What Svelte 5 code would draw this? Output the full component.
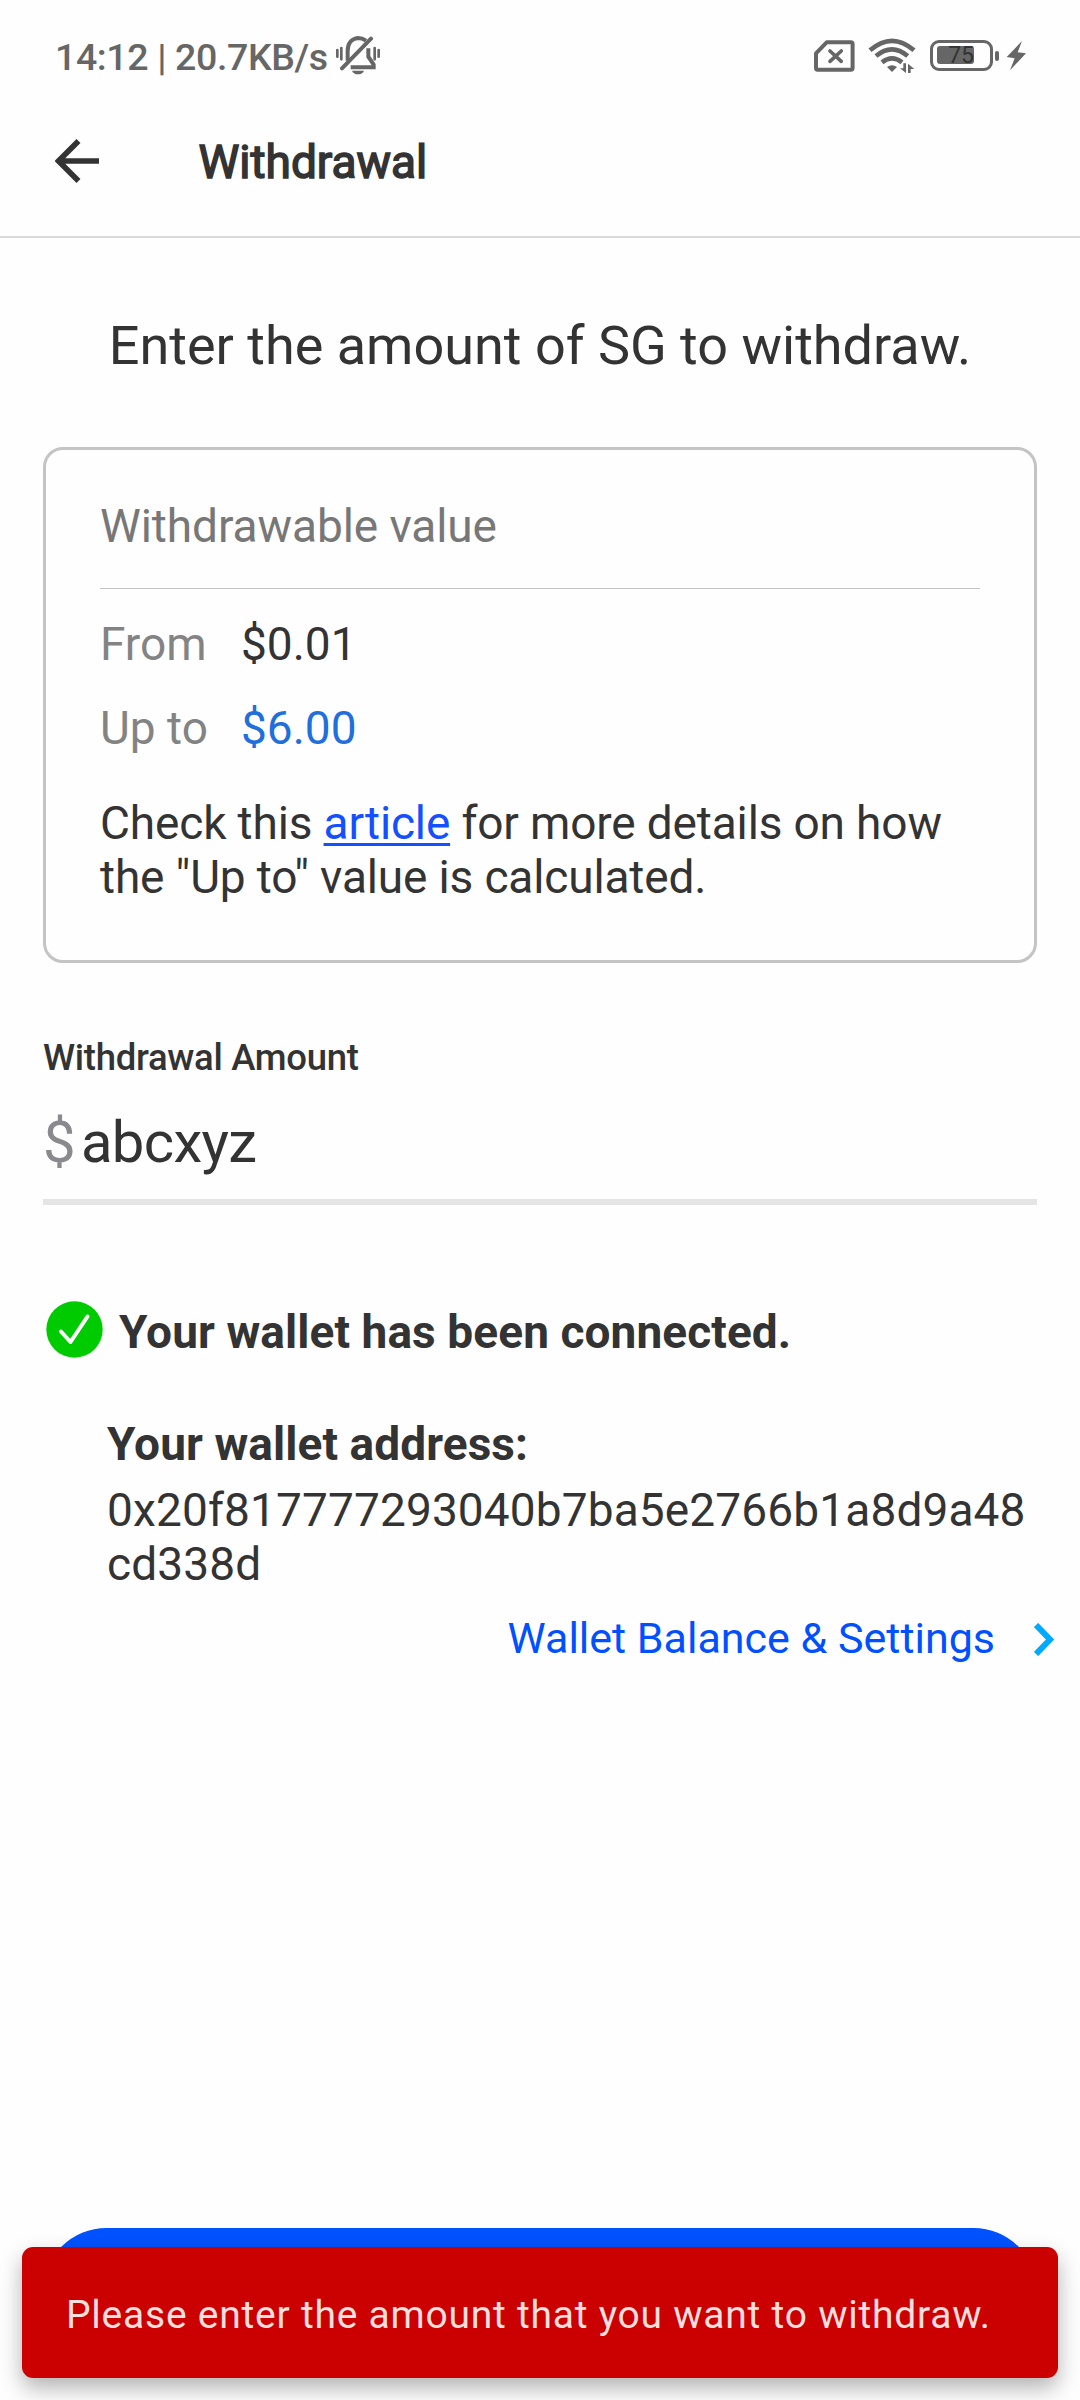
<script>
  const limits = [
    { label: 'From', value: '$0.01', accent: false },
    { label: 'Up to', value: '$6.00', accent: true },
  ];
  const address = '0x20f817777293040b7ba5e2766b1a8d9a48cd338d';
</script>

<div class="screen">
  <div class="status">
    <span class="clock">14:12 | 20.7KB/s</span>
    <svg class="bell" viewBox="915 48 138 117" fill="none" stroke="#666">
      <path d="M922 90V110M934 84V118M1034 84V118M1046 90V110" stroke-width="8" stroke-linecap="round" />
      <path d="M953 122V92C953 70 965 56 984 54C994 54 1001 57 1008 62M1015 85V110L1031 134V142H962" stroke-width="12" />
      <path d="M936 145L1023 56" stroke-width="12" stroke-linecap="round" />
      <path d="M966 152H1002C999 160 992 163 984 163C976 163 969 160 966 152Z" fill="#666" stroke="none" />
    </svg>
    <div class="indicators">
      <svg class="sim" viewBox="71 61 122 96" fill="none" stroke="#666">
        <path d="M109 68H182Q187 68 187 73V145Q187 150 182 150H82Q77 150 77 145V101Z" stroke-width="12" stroke-linejoin="round" />
        <path d="M119 94L153 125M153 94L119 125" stroke-width="11" stroke-linecap="round" />
      </svg>
      <svg class="wifi" viewBox="234 54 144 108" fill="none" stroke="#666">
        <path d="M240 91Q306 34 372 91" stroke-width="14" />
        <path d="M258 108Q306 68 353 108" stroke-width="14" />
        <path d="M276 127Q306 103 336 127" stroke-width="14" />
        <path d="M291 141Q306 130 321 141L306 156Z" fill="#666" stroke="none" />
        <path d="M348 130V159L330 145H340V130ZM354 159V131L373 147H362V159Z" fill="#666" stroke="none" />
      </svg>
      <div class="battery">
        <div class="shell"><div class="charge"><span>75</span></div></div>
        <div class="nub"></div>
      </div>
      <svg class="bolt" viewBox="646 62 60 88"><path d="M694 62L648 110L672 114L658 150L706 99L681 96Z" fill="#666" /></svg>
    </div>
  </div>

  <header>
    <svg class="back" viewBox="0 0 44 44" fill="none" stroke="#333" stroke-width="5.6">
      <path d="M3 22H44M23.5 2L3.5 22L23.5 42" />
    </svg>
    <h1>Withdrawal</h1>
  </header>

  <main>
    <h2>Enter the amount of SG to withdraw.</h2>

    <section class="card">
      <div class="card-title">Withdrawable value</div>
      <div class="limits">
        {#each limits as limit}
          <div class="limit">
            <span class="name">{limit.label}</span>
            <span class:accent={limit.accent}>{limit.value}</span>
          </div>
        {/each}
      </div>
      <p>Check this <span class="link">article</span> for more details on how<br />the "Up to" value is calculated.</p>
    </section>

    <div class="label">Withdrawal Amount</div>
    <div class="field"><span class="currency">$</span><span class="amount">abcxyz</span></div>

    <div class="connected">
      <svg viewBox="0 0 57 57">
        <circle cx="28.5" cy="28.5" r="28.2" fill="#00cb00" />
        <path d="M15 30.5L24.5 41L41.5 15.5" fill="none" stroke="#fff" stroke-width="4" stroke-linecap="round" stroke-linejoin="round" />
      </svg>
      <strong>Your wallet has been connected.</strong>
    </div>

    <div class="wallet">
      <strong>Your wallet address:</strong>
      <div class="address">{address}</div>
    </div>

    <div class="settings">
      <span>Wallet Balance &amp; Settings</span>
      <svg viewBox="0 0 20 33" fill="none" stroke="#00aaff" stroke-width="6"><path d="M2 2L16 16.5L2 31" /></svg>
    </div>

    <button class="submit" aria-label="Withdraw"></button>
  </main>

  <div class="toast">Please enter the amount that you want to withdraw.</div>
</div>

<style>
  :global(body) { background: #fefefe; }
  .screen {
    position: relative;
    display: flex;
    flex-direction: column;
    width: 1080px;
    height: 2400px;
    overflow: hidden;
    background: #fefefe;
    color: #333;
    font: 400 46px/54px Roboto, sans-serif;
  }
  svg { display: block; flex: none; }
  strong { font-weight: 700; letter-spacing: 0.08px; }

  .status {
    display: flex;
    align-items: center;
    box-sizing: border-box;
    height: 110px;
    padding: 1px 54px 0 55px;
    color: #666;
  }
  .clock { width: 280px; padding-top: 2px; font-size: 37.5px; font-weight: 500; letter-spacing: -0.38px; white-space: nowrap; }
  .bell { width: 46px; height: 39px; }
  .indicators { display: flex; align-items: center; margin-left: auto; }
  .sim { width: 40.6px; height: 32px; margin: 1px 13px 0 0; }
  .wifi { width: 48px; height: 36px; margin-right: 14px; }
  .battery { display: flex; align-items: center; gap: 2px; margin-right: 7px; }
  .shell {
    box-sizing: border-box;
    width: 63px;
    height: 31px;
    padding: 3px 4px;
    border: 3px solid #666;
    border-radius: 9px;
  }
  .charge {
    display: flex;
    justify-content: flex-end;
    width: 37px;
    height: 18px;
    border-radius: 3px;
    background: #666;
    color: #333;
    font-size: 23px;
    line-height: 20px;
  }
  .nub { width: 4px; height: 10px; border-radius: 2px; background: #666; }
  .bolt { width: 20px; height: 29.3px; }

  header {
    display: flex;
    align-items: center;
    box-sizing: border-box;
    height: 128px;
    padding: 0 55px 24px;
    border-bottom: 2px solid #d9d9d9;
  }
  .back { width: 44px; height: 44px; }
  h1 {
    margin: 2px 0 0 99.5px;
    font-size: 46px;
    font-weight: 400;
    -webkit-text-stroke: 1.5px #333;
  }

  main { display: flex; flex: 1; flex-direction: column; padding: 77px 43px 45px; }
  h2 { margin: 0 0 70px; font-size: 54px; font-weight: 400; line-height: 62px; text-align: center; white-space: nowrap; }

  .card { padding: 49px 54px 56px; border: 3px solid #c4c4c4; border-radius: 20px; }
  .card-title { padding-bottom: 35px; border-bottom: 1px solid #c4c4c4; color: #777; letter-spacing: -0.08px; }
  .limits { display: grid; gap: 30px; margin: 28px 0 41px; }
  .limit { display: grid; grid-template-columns: 141px auto; }
  .name { color: #838383; }
  .accent { color: #1f6fdc; }
  p { margin: 0; letter-spacing: -0.15px; white-space: nowrap; }
  .link { color: #1450ff; text-decoration: underline; text-decoration-thickness: 3px; text-underline-offset: 4px; }

  .label { margin: 73px 0 27px; font-size: 36.5px; font-weight: 500; line-height: 44px; letter-spacing: -0.3px; }
  .field { display: flex; padding-bottom: 22px; border-bottom: 6px solid #e5e5e5; font-size: 58px; line-height: 70px; }
  .currency { width: 38px; color: #8a8a8e; }
  .amount { letter-spacing: -0.7px; }

  .connected { display: flex; gap: 16px; height: 58px; margin-top: 96px; padding-left: 3px; }
  .connected svg { width: 57px; height: 57px; }
  .connected strong { padding-top: 4px; }
  .wallet { display: grid; gap: 12px; margin: 58px 0 20px; padding-left: 64px; }
  .address { width: 925px; overflow-wrap: anywhere; letter-spacing: 0.13px; }
  .settings { display: flex; align-items: center; justify-content: flex-end; gap: 39px; margin-right: -17px; color: #0050ff; font-size: 43px; }
  .settings svg { width: 20px; height: 33px; margin-top: 2px; }

  .submit { height: 127px; margin-top: auto; border: 0; border-radius: 64px; background: #0052ff; }
  .toast {
    position: absolute;
    right: 22px;
    bottom: 22px;
    left: 22px;
    box-sizing: border-box;
    height: 131px;
    padding-left: 44px;
    border-radius: 11px;
    background: #cb0000;
    box-shadow: 0 10px 22px rgba(0, 0, 0, 0.3);
    color: #fbdede;
    font-size: 39px;
    line-height: 136px;
    letter-spacing: 0.76px;
    white-space: nowrap;
  }
</style>
